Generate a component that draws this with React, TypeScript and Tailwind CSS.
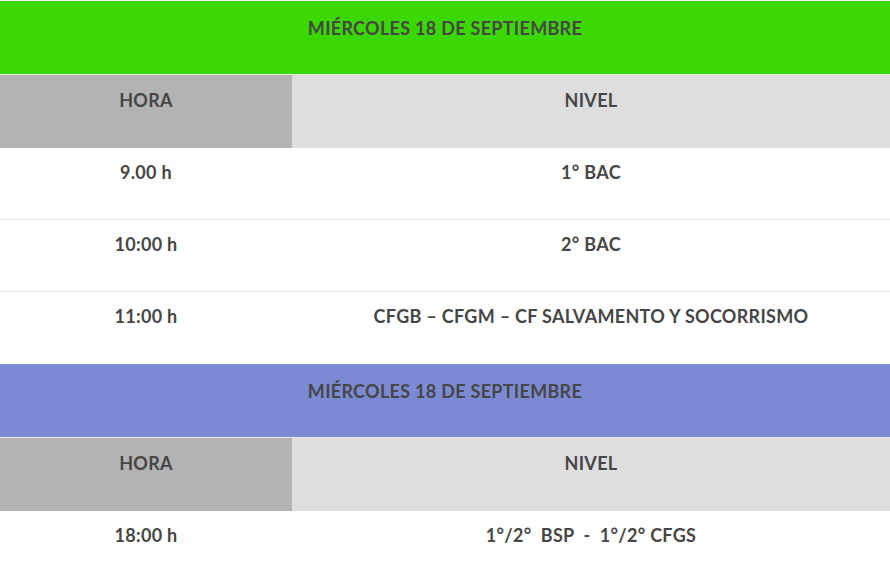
const font = { fontFamily: 'Lato, "Open Sans", sans-serif' };

type Row = { hora: string; nivel: string };

const cell = 'text-[18px] font-bold leading-[22px] tracking-[0.3px] text-[#464646]';

const DayBlock = ({ title, bg, rows }: { title: string; bg: string; rows: Row[] }) => (
  <div>
    <div className={`${bg} ${cell} h-[73px] pt-[16px] text-center`}>{title}</div>
    <div className="h-px bg-[#e6eee2]" />
    <div className={`grid h-[73px] grid-cols-[292px_1fr] ${cell}`}>
      <div className="bg-[#b3b3b3] pt-[14px] text-center">HORA</div>
      <div className="bg-[#dedede] pt-[14px] text-center">NIVEL</div>
    </div>
    {rows.map((r, i) => (
      <div
        key={i}
        className={`grid h-[72px] grid-cols-[292px_1fr] ${cell} ${
          i < rows.length - 1 ? 'border-b border-[#e8e8e8]' : ''
        }`}
      >
        <div className="pt-[13px] text-center">{r.hora}</div>
        <div className="whitespace-pre pt-[13px] text-center">{r.nivel}</div>
      </div>
    ))}
  </div>
);

export default function App() {
  return (
    <div className="h-[562px] w-[890px] overflow-hidden bg-white" style={font}>
      <div className="h-px bg-[#eef0ee]" />
      <DayBlock
        title="MIÉRCOLES 18 DE SEPTIEMBRE"
        bg="bg-[#3ad700]"
        rows={[
          { hora: '9.00 h', nivel: '1° BAC' },
          { hora: '10:00 h', nivel: '2° BAC' },
          { hora: '11:00 h', nivel: 'CFGB – CFGM – CF SALVAMENTO Y SOCORRISMO' },
        ]}
      />
      <DayBlock
        title="MIÉRCOLES 18 DE SEPTIEMBRE"
        bg="bg-[#7c8ad4]"
        rows={[{ hora: '18:00 h', nivel: '1°/2°  BSP  -  1°/2° CFGS' }]}
      />
    </div>
  );
}
